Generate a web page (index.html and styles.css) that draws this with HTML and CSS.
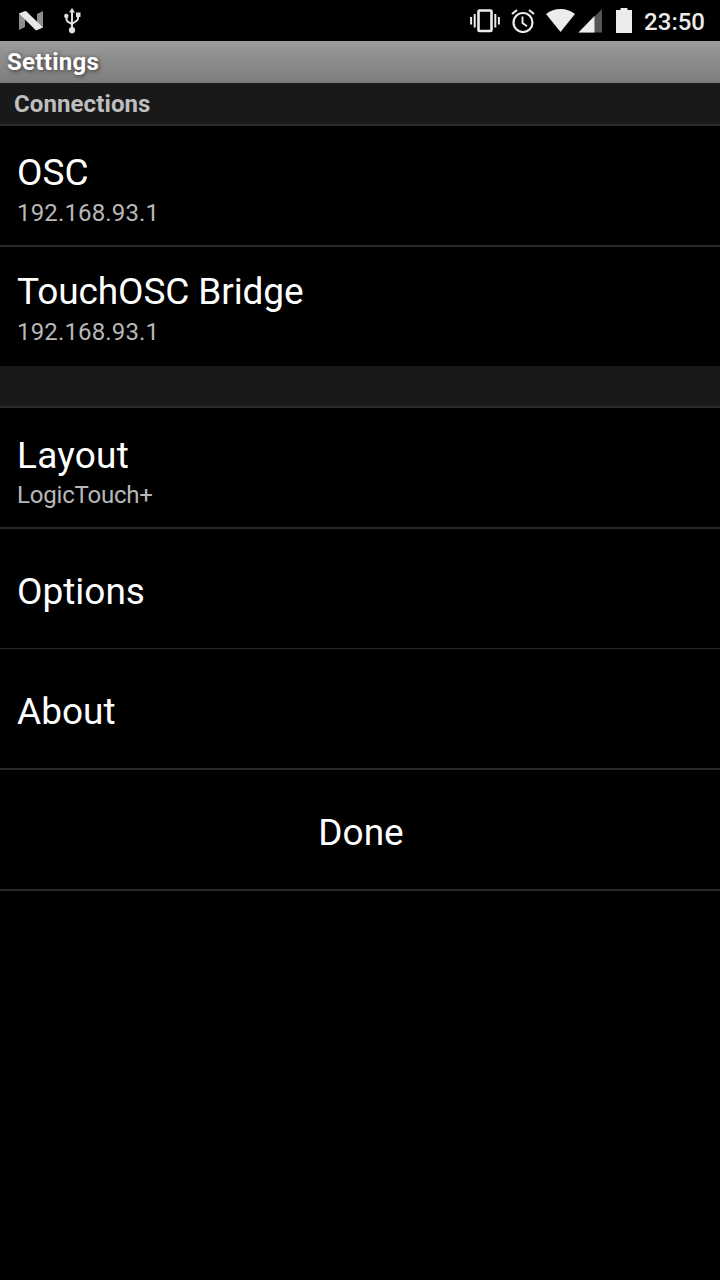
FILE: index.html
```
<!DOCTYPE html>
<html lang="en">
<head>
  <meta charset="UTF-8" />
  <meta name="viewport" content="width=device-width, initial-scale=1" />
  <title>Settings</title>
  <link rel="stylesheet" href="styles.css">
</head>
<body>

  <div class="status-bar">
    <div class="notifications">
      <svg width="24" height="20" viewBox="0 0 24 20">
        <path d="M0 2.5 6 0V16L0 19Z M18 3 24 0V16L18 19Z" fill="#8e8e8e" />
        <path d="M0 2.5 7 0 24 16.5 17 19.500Z" fill="#e8e8e8" />
      </svg>
      <svg class="usb" width="18" height="26" viewBox="0 0 18 26">
        <path d="M8 3V22 M2.500 8V11.500Q2.500 13 4 13.800L8 16 M14 7V10.500Q14 12 12.500 12.800L8 16" fill="none" stroke="#dedede" stroke-width="2" />
        <path d="M8 0 11 4.500H5Z M12 4.500H16.500V9H12Z" fill="#dedede" />
        <circle cx="2.300" cy="8" r="2.200" fill="#dedede" />
        <circle cx="8" cy="22.200" r="3.100" fill="#dedede" />
      </svg>
    </div>
    <div class="system">
      <svg class="vibrate" width="30" height="24" viewBox="0 0 30 24">
        <rect x="8.500" y="1.500" width="13" height="20.500" rx="1" fill="none" stroke="#ececec" stroke-width="2.600" />
        <path d="M1.100 8V15.500 M4.700 5V18.500 M25.300 5V18.500 M28.900 8V15.500" stroke="#ececec" stroke-width="2" />
      </svg>
      <svg class="alarm" width="24" height="24" viewBox="0 0 24 24">
        <circle cx="12" cy="13.500" r="9.500" fill="none" stroke="#ececec" stroke-width="2.200" />
        <path d="M1 5 6 1 M18 1 23 5" stroke="#ececec" stroke-width="2.200" />
        <path d="M11.500 7.500V14L16 17.200" fill="none" stroke="#ececec" stroke-width="1.900" />
      </svg>
      <svg class="wifi" width="29" height="24" viewBox="0 0 29 24">
        <path d="M0 5Q6.500 0 14.500 0T29 5L14.500 23Z" fill="#ececec" />
      </svg>
      <svg class="signal" width="24" height="24" viewBox="0 0 24 24">
        <path d="M.5 23.500 24 0V23.500Z" fill="#555" />
        <path d="M.5 23.500 16.500 7V23.500Z" fill="#ececec" />
      </svg>
      <svg class="battery" width="16" height="25" viewBox="0 0 16 25">
        <path d="M4.500 0H11.500V2H16V25H0V2H4.500Z" fill="#ececec" />
      </svg>
      <span class="clock">23:50</span>
    </div>
  </div>

  <header>Settings</header>

  <main>
    <h2 class="category">Connections</h2>
    <ul>
      <li class="detail">
        <span class="title">OSC</span>
        <span class="summary address">192.168.93.1</span>
      </li>
      <li class="last">
        <span class="title bridge">TouchOSC Bridge</span>
        <span class="summary address">192.168.93.1</span>
      </li>
    </ul>

    <h2 class="category empty"></h2>
    <ul>
      <li class="detail layout">
        <span class="title">Layout</span>
        <span class="summary">LogicTouch+</span>
      </li>
      <li class="thin"><span class="title">Options</span></li>
      <li><span class="title">About</span></li>
      <li class="done"><span class="title">Done</span></li>
    </ul>
  </main>

</body>
</html>
```
FILE: styles.css
```
* {
  box-sizing: border-box;
}

body {
  margin: 0;
  min-height: 100vh;
  background: #000;
  color: #fff;
  font-family: Roboto, "Liberation Sans", sans-serif;
}

svg {
  display: block;
}

.status-bar {
  display: flex;
  justify-content: space-between;
  height: 41px;
  padding: 0 15px 0 19px;
}

.notifications,
.system {
  display: flex;
  align-items: center;
}

.notifications {
  gap: 21px;
}

.alarm {
  margin-left: 11px;
}

.wifi {
  margin-left: 11px;
}

.signal {
  margin-left: 3px;
}

.battery {
  margin-left: 14px;
}

.clock {
  margin-left: 12px;
  padding-top: 2px;
  font-size: 24px;
  font-weight: 500;
  line-height: 28px;
  color: #ececec;
}

header {
  height: 42px;
  padding-left: 7px;
  background: linear-gradient(#9b9b9b, #7c7c7c);
  font-size: 24px;
  font-weight: 700;
  line-height: 42px;
  letter-spacing: 0.3px;
  text-shadow: 1px 1px 4px #333;
}

.category {
  height: 43px;
  margin: 0;
  padding-left: 14px;
  background: #191919;
  border-bottom: 2px solid #2b2b2b;
  font-size: 24px;
  font-weight: 700;
  line-height: 42px;
  letter-spacing: 0.1px;
  color: #bebebe;
}

.category.empty {
  height: 42px;
}

ul {
  list-style: none;
  margin: 0;
  padding: 0;
}

li {
  display: flex;
  flex-direction: column;
  justify-content: center;
  height: 121px;
  padding: 6px 17px 0;
  border-bottom: 2px solid #282828;
}

li.detail {
  padding-top: 11px;
}

li.detail.layout {
  padding-top: 10px;
}

li.last {
  height: 119px;
  padding-top: 7px;
  border-bottom: none;
}

li.thin {
  height: 120px;
  border-bottom-width: 1px;
}

li.done {
  align-items: center;
  padding-left: 19px;
}

.title {
  font-size: 37px;
  line-height: 44px;
}

.bridge {
  letter-spacing: -0.1px;
}

.summary {
  font-size: 24px;
  line-height: 36px;
  color: #b8b8b8;
}

.address {
  letter-spacing: 0.15px;
}

.layout .title {
  letter-spacing: 0.25px;
}

.layout .summary {
  line-height: 34px;
  letter-spacing: -0.2px;
}
```
